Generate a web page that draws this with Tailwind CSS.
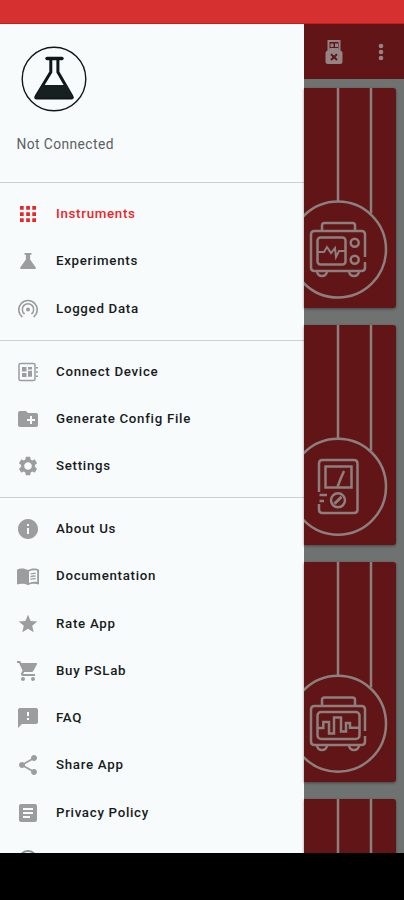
<!DOCTYPE html>
<html lang="en">
<head>
<meta charset="utf-8">
<title>PSLab</title>
<script src="https://cdn.jsdelivr.net/npm/@tailwindcss/browser@4"></script>
</head>
<body class="w-[404px] h-[900px] overflow-hidden bg-black flex flex-col font-[Roboto,sans-serif]">
<div class="h-6 shrink-0 bg-[#d63030] border-b border-[#c71c1e]"></div>
<div class="h-[829px] shrink-0 flex overflow-hidden">
  <aside class="w-[304px] h-full shrink-0 overflow-hidden bg-[#f7fbfc]">
    <header class="h-[159px] border-b border-[#cbd1d2] pl-[21px] pt-[22px]">
      <svg class="size-[66px]" viewBox="0 0 66 66" fill="none" stroke="#101719"><circle cx="33" cy="33" r="31.800" stroke-width="1.400"/><path d="M26 12.500h15" stroke-width="3.400" stroke-linecap="round"/><path d="M29.800 13v13L15 50.500q-1 1.500 1 1.500h34q2 0 1-1.500L36.900 26V13" stroke-width="3"/><path d="M21.500 39h23.500l7.500 12.500H14z" fill="#172021" stroke="none"/></svg>
      <p class="-ml-[4.500px] mt-[22px] text-[13.800px] leading-5 tracking-[0.42px] text-[#5c6061]">Not Connected</p>
    </header>
    <nav class="text-[13.300px] font-medium tracking-[0.7px] text-[#171b1c]">
      <ul class="pt-[7.400px] pb-[7.600px] border-b border-[#cbd1d2]">
        <li class="h-[47.300px] flex items-center gap-[16px] pl-4 text-[#ec2326]"><svg class="size-6" viewBox="0 0 24 24" fill="currentColor"><path d="M4 4h3.700v3.700H4zm6.200 0h3.700v3.700h-3.700zm6.100 0H20v3.700h-3.700zM4 10.200h3.700v3.700H4zm6.200 0h3.700v3.700h-3.700zm6.100 0H20v3.700h-3.700zM4 16.300h3.700V20H4zm6.200 0h3.700V20h-3.700zm6.100 0H20V20h-3.700z"/></svg>Instruments</li>
        <li class="h-[47.300px] flex items-center gap-[16px] pl-4"><svg class="size-6" viewBox="0 0 24 24" fill="#9b9d9e"><path d="M8.500 4h7v1.700h-1.400v4.700l5.500 7.800q1 1.600-.9 1.800H5.300q-1.900-.2-.9-1.800l5.500-7.800V5.700H8.500z"/></svg>Experiments</li>
        <li class="h-[47.300px] flex items-center gap-[16px] pl-4"><svg class="size-6" viewBox="0 0 24 24" fill="none" stroke="#9b9d9e" stroke-width="1.600"><path d="M6.400 20A9.200 9.200 0 1 1 17.600 20M8.600 17A5.700 5.700 0 1 1 15.400 17"/><circle cx="12" cy="12.500" r="2" fill="#9b9d9e" stroke="none"/></svg>Logged Data</li>
      </ul>
      <ul class="pt-[7px] pb-[7px] border-b border-[#cbd1d2]">
        <li class="h-[47.300px] flex items-center gap-[16px] pl-4"><svg class="size-6" viewBox="0 0 24 24" fill="#9b9d9e"><rect x="3" y="3.500" width="16" height="17" rx="1.500" fill="none" stroke="#9b9d9e" stroke-width="1.500"/><path d="M6 7h4.500v4.500H6zm6 0h4v2.600h-4zm0 3.800h4v6h-4zM6 13h4.500v4H6zM20 7h2v1.500h-2zm0 4.200h2v1.500h-2zm0 4.300h2V17h-2z"/></svg>Connect Device</li>
        <li class="h-[47.300px] flex items-center gap-[16px] pl-4"><svg class="size-6" viewBox="0 0 24 24" fill="#9b9d9e"><path d="M20 6h-8l-2-2H4c-1.110 0-1.990.89-1.990 2L2 18c0 1.110.89 2 2 2h16c1.110 0 2-.89 2-2V8c0-1.110-.89-2-2-2zm-1 8h-3v3h-2v-3h-3v-2h3V9h2v3h3z"/></svg>Generate Config File</li>
        <li class="h-[47.300px] flex items-center gap-[16px] pl-4"><svg class="size-6" viewBox="-0.500 -0.500 25 25" fill="#9b9d9e"><path d="M19.140 12.940c.04-.3.060-.61.060-.94 0-.32-.02-.64-.07-.94l2.030-1.580c.18-.14.230-.41.120-.61l-1.920-3.320c-.12-.22-.37-.29-.59-.22l-2.390.96c-.5-.38-1.030-.7-1.620-.94l-.36-2.540c-.04-.24-.24-.41-.48-.41h-3.840c-.24 0-.43.17-.47.41l-.36 2.540c-.59.24-1.130.57-1.620.94l-2.390-.96c-.22-.08-.47 0-.59.22L2.740 8.870c-.12.21-.08.470.12.610l2.030 1.580c-.05.3-.09.630-.09.940s.02.640.070.940l-2.030 1.580c-.18.140-.23.410-.12.610l1.920 3.320c.12.220.370.290.590.220l2.390-.96c.5.380 1.030.7 1.620.94l.36 2.540c.05.240.24.410.48.410h3.840c.24 0 .44-.17.47-.41l.36-2.540c.59-.24 1.130-.56 1.620-.94l2.390.96c.22.080.47 0 .59-.22l1.920-3.320c.12-.22.070-.47-.12-.61zM12 16c-2.200 0-4-1.800-4-4s1.800-4 4-4 4 1.800 4 4-1.800 4-4 4z"/></svg>Settings</li>
      </ul>
      <ul class="pt-[7.500px]">
        <li class="h-[47.300px] flex items-center gap-[16px] pl-4"><svg class="size-6" viewBox="0 0 24 24" fill="#9b9d9e"><path d="M12 2C6.480 2 2 6.480 2 12s4.480 10 10 10 10-4.480 10-10S17.520 2 12 2zm1 15h-2v-6h2zm0-8h-2V7h2z"/></svg>About Us</li>
        <li class="h-[47.300px] flex items-center gap-[16px] pl-4"><svg class="size-6" viewBox="0 0 24 24" fill="#9b9d9e"><path fill-rule="evenodd" d="M1 5.500C4 3.900 9 4 12 6c3-2 8-2.100 11-.5v15c-3-1.200-8-1.100-11 .7-3-1.800-8-1.900-11-.7zM13 7.500V19c2.500-1.200 5.500-1.500 8.200-1V6.700c-2.700-.8-5.700-.5-8.200.8z"/><path d="M14.500 10q2.500-1 5.200-.6m-5.200 3.300q2.500-1 5.200-.6m-5.200 3.300q2.500-1 5.200-.6" fill="none" stroke="#9b9d9e" stroke-width="1.300"/></svg>Documentation</li>
        <li class="h-[47.300px] flex items-center gap-[16px] pl-4"><svg class="size-6" viewBox="-1 -1 26 26" fill="#9b9d9e"><path d="M12 17.270 18.180 21l-1.640-7.030L22 9.240l-7.190-.61L12 2 9.190 8.630 2 9.240l5.460 4.730L5.820 21z"/></svg>Rate App</li>
        <li class="h-[47.300px] flex items-center gap-[16px] pl-4"><svg class="size-6" viewBox="0 0 24 24" fill="#9b9d9e"><path d="M7 18c-1.100 0-1.990.9-1.990 2S5.900 22 7 22s2-.9 2-2-.9-2-2-2zM1 2v2h2l3.600 7.590-1.350 2.450c-.16.280-.25.610-.25.960 0 1.100.9 2 2 2h12v-2H7.420c-.14 0-.25-.11-.25-.25l.03-.12.9-1.630h7.450c.75 0 1.410-.41 1.750-1.030l3.580-6.490A1 1 0 0 0 20 4H5.210l-.94-2zm16 16c-1.100 0-1.990.9-1.990 2s.89 2 1.990 2 2-.9 2-2-.9-2-2-2z"/></svg>Buy PSLab</li>
        <li class="h-[47.300px] flex items-center gap-[16px] pl-4"><svg class="size-6" viewBox="0 0 24 24" fill="#9b9d9e"><path d="M20 2H4c-1.100 0-1.990.9-1.990 2L2 22l4-4h14c1.100 0 2-.9 2-2V4c0-1.100-.9-2-2-2zm-7 12h-2v-2h2zm0-4h-2V6h2z"/></svg>FAQ</li>
        <li class="h-[47.300px] flex items-center gap-[16px] pl-4"><svg class="size-6" viewBox="0 0 24 24" fill="#9b9d9e"><path d="M18 16.080c-.76 0-1.440.3-1.960.77L8.910 12.700c.05-.23.090-.46.090-.7s-.04-.47-.09-.7l7.050-4.110c.54.5 1.250.81 2.040.81 1.660 0 3-1.340 3-3s-1.340-3-3-3-3 1.340-3 3c0 .24.040.470.090.7L8.040 9.810C7.500 9.310 6.790 9 6 9c-1.660 0-3 1.340-3 3s1.340 3 3 3c.79 0 1.500-.31 2.040-.81l7.120 4.160c-.05.210-.08.430-.08.650 0 1.610 1.310 2.920 2.920 2.920s2.920-1.310 2.920-2.920-1.310-2.920-2.920-2.920z"/></svg>Share App</li>
        <li class="h-[47.300px] flex items-center gap-[16px] pl-4"><svg class="size-6" viewBox="0 0 24 24" fill="#9b9d9e"><path d="M19 3H5c-1.100 0-2 .9-2 2v14c0 1.100.9 2 2 2h14c1.100 0 2-.9 2-2V5c0-1.100-.9-2-2-2zm-5 14H7v-2h7zm3-4H7v-2h10zm0-4H7V7h10z"/></svg>Privacy Policy</li>
        <li class="h-[47.300px] flex items-center gap-[16px] pl-4"><svg class="size-6" viewBox="0 0 24 24" fill="none" stroke="#8b8d8e" stroke-width="1.800"><circle cx="12" cy="12" r="9"/></svg></li>
      </ul>
    </nav>
  </aside>
  <main class="w-[100px] shrink-0 h-full bg-[#6e7271]">
    <div class="h-[55px] bg-[#611517] flex items-center">
      <svg class="ml-[21px] w-[18px] h-[26px]" viewBox="0 0 18 26" fill="#948484"><path fill-rule="evenodd" d="M2.500 1h13v10.500q2 .5 2 2.500v8.500q0 2.500-2.500 2.500H3Q.5 25 .5 22.500V14q0-2 2-2.500zM4.500 3v7.500h9V3z"/><path d="M5.500 4.500h3V8h-3zm4.500 0h3V8h-3zM4.500 9h9v2h-9z"/><path d="m6 15.300 6 5.700m0-5.700L6 21" stroke="#611517" stroke-width="2" fill="none"/></svg>
      <svg class="ml-[29px] w-[18px] h-[22px]" viewBox="0 0 18 22" fill="#948484"><circle cx="9" cy="5" r="2.300"/><circle cx="9" cy="11" r="2.300"/><circle cx="9" cy="17" r="2.300"/></svg>
    </div>
    <div class="pt-[9px] flex flex-col gap-[17px]">
      <div class="w-[92px] h-[220px] bg-[#611517] rounded-r-[3px] shadow-[0_1px_3px_rgba(0,0,0,0.400)]">
        <svg class="w-[92px] h-[220px]" viewBox="0 0 92 220" fill="none" stroke="#8d7f7e" stroke-width="2.500"><path d="M34 0v113M67 0v125.500"/><circle cx="34" cy="161.500" r="48"/><path d="M18 143v-5.500q0-2.500 2.500-2.500h28q2.500 0 2.500 2.500v5.500"/><path d="M61 169v-22.500q0-3.500-3.500-3.500h-47Q7 143 7 146.500v33q0 3.500 3.500 3.500h47q3.500 0 3.500-3.500V174"/><rect x="13.500" y="149.500" width="28" height="27" rx="3"/><path d="M14 164h6l3-5 4 6 4-5 1 9 3-6h6" stroke-width="2"/><circle cx="50.700" cy="154.700" r="4"/><circle cx="50.700" cy="171.700" r="4"/><path d="M13 184q1 4 5 4t5-4m22 0q1 4 5 4t5-4"/></svg>
      </div>
      <div class="w-[92px] h-[220px] bg-[#611517] rounded-r-[3px] shadow-[0_1px_3px_rgba(0,0,0,0.400)]">
        <svg class="w-[92px] h-[220px]" viewBox="0 0 92 220" fill="none" stroke="#8d7f7e" stroke-width="2.500"><path d="M34 0v113M67 0v125.500"/><circle cx="34" cy="161.700" r="48"/><path d="M15 167v-28.500q0-3.500 3.500-3.500h31.500q3.500 0 3.500 3.500v46q0 3.500-3.500 3.500H18.500Q15 188 15 184.500V179M15.500 170h7.500M15.500 176h4.500"/><rect x="21.500" y="141.500" width="26" height="21"/><path d="M33.500 162l3-8 3.500-8"/><circle cx="34" cy="175.300" r="7"/><path d="m30.500 178.800 7-7" stroke-width="3"/></svg>
      </div>
      <div class="w-[92px] h-[220px] bg-[#611517] rounded-r-[3px] shadow-[0_1px_3px_rgba(0,0,0,0.400)]">
        <svg class="w-[92px] h-[220px]" viewBox="0 0 92 220" fill="none" stroke="#8d7f7e" stroke-width="2.500"><path d="M34 0v113M67 0v125.500"/><circle cx="34" cy="161.700" r="48"/><path d="M18 143v-5q0-2.500 2.500-2.500h28q2.500 0 2.500 2.500v5"/><path d="M61 169v-21.500q0-3.500-3.500-3.500h-47Q7 144 7 147.500v32q0 3.500 3.500 3.500h47q3.500 0 3.500-3.500V174"/><rect x="13.500" y="150" width="42" height="27" rx="3.500"/><path d="M14 166h5.300v-6H25v11.500h5v-16h7v14h5V161h4v4.700h9"/><path d="M13 184q1 4 5 4t5-4m22 0q1 4 5 4t5-4"/></svg>
      </div>
      <div class="w-[92px] h-[220px] bg-[#611517] rounded-r-[3px] shadow-[0_1px_3px_rgba(0,0,0,0.400)]">
        <svg class="w-[92px] h-[220px]" viewBox="0 0 92 220" fill="none" stroke="#8d7f7e" stroke-width="2.500"><path d="M34 0v113M67 0v125.500"/></svg>
      </div>
    </div>
  </main>
</div>
</body>
</html>
